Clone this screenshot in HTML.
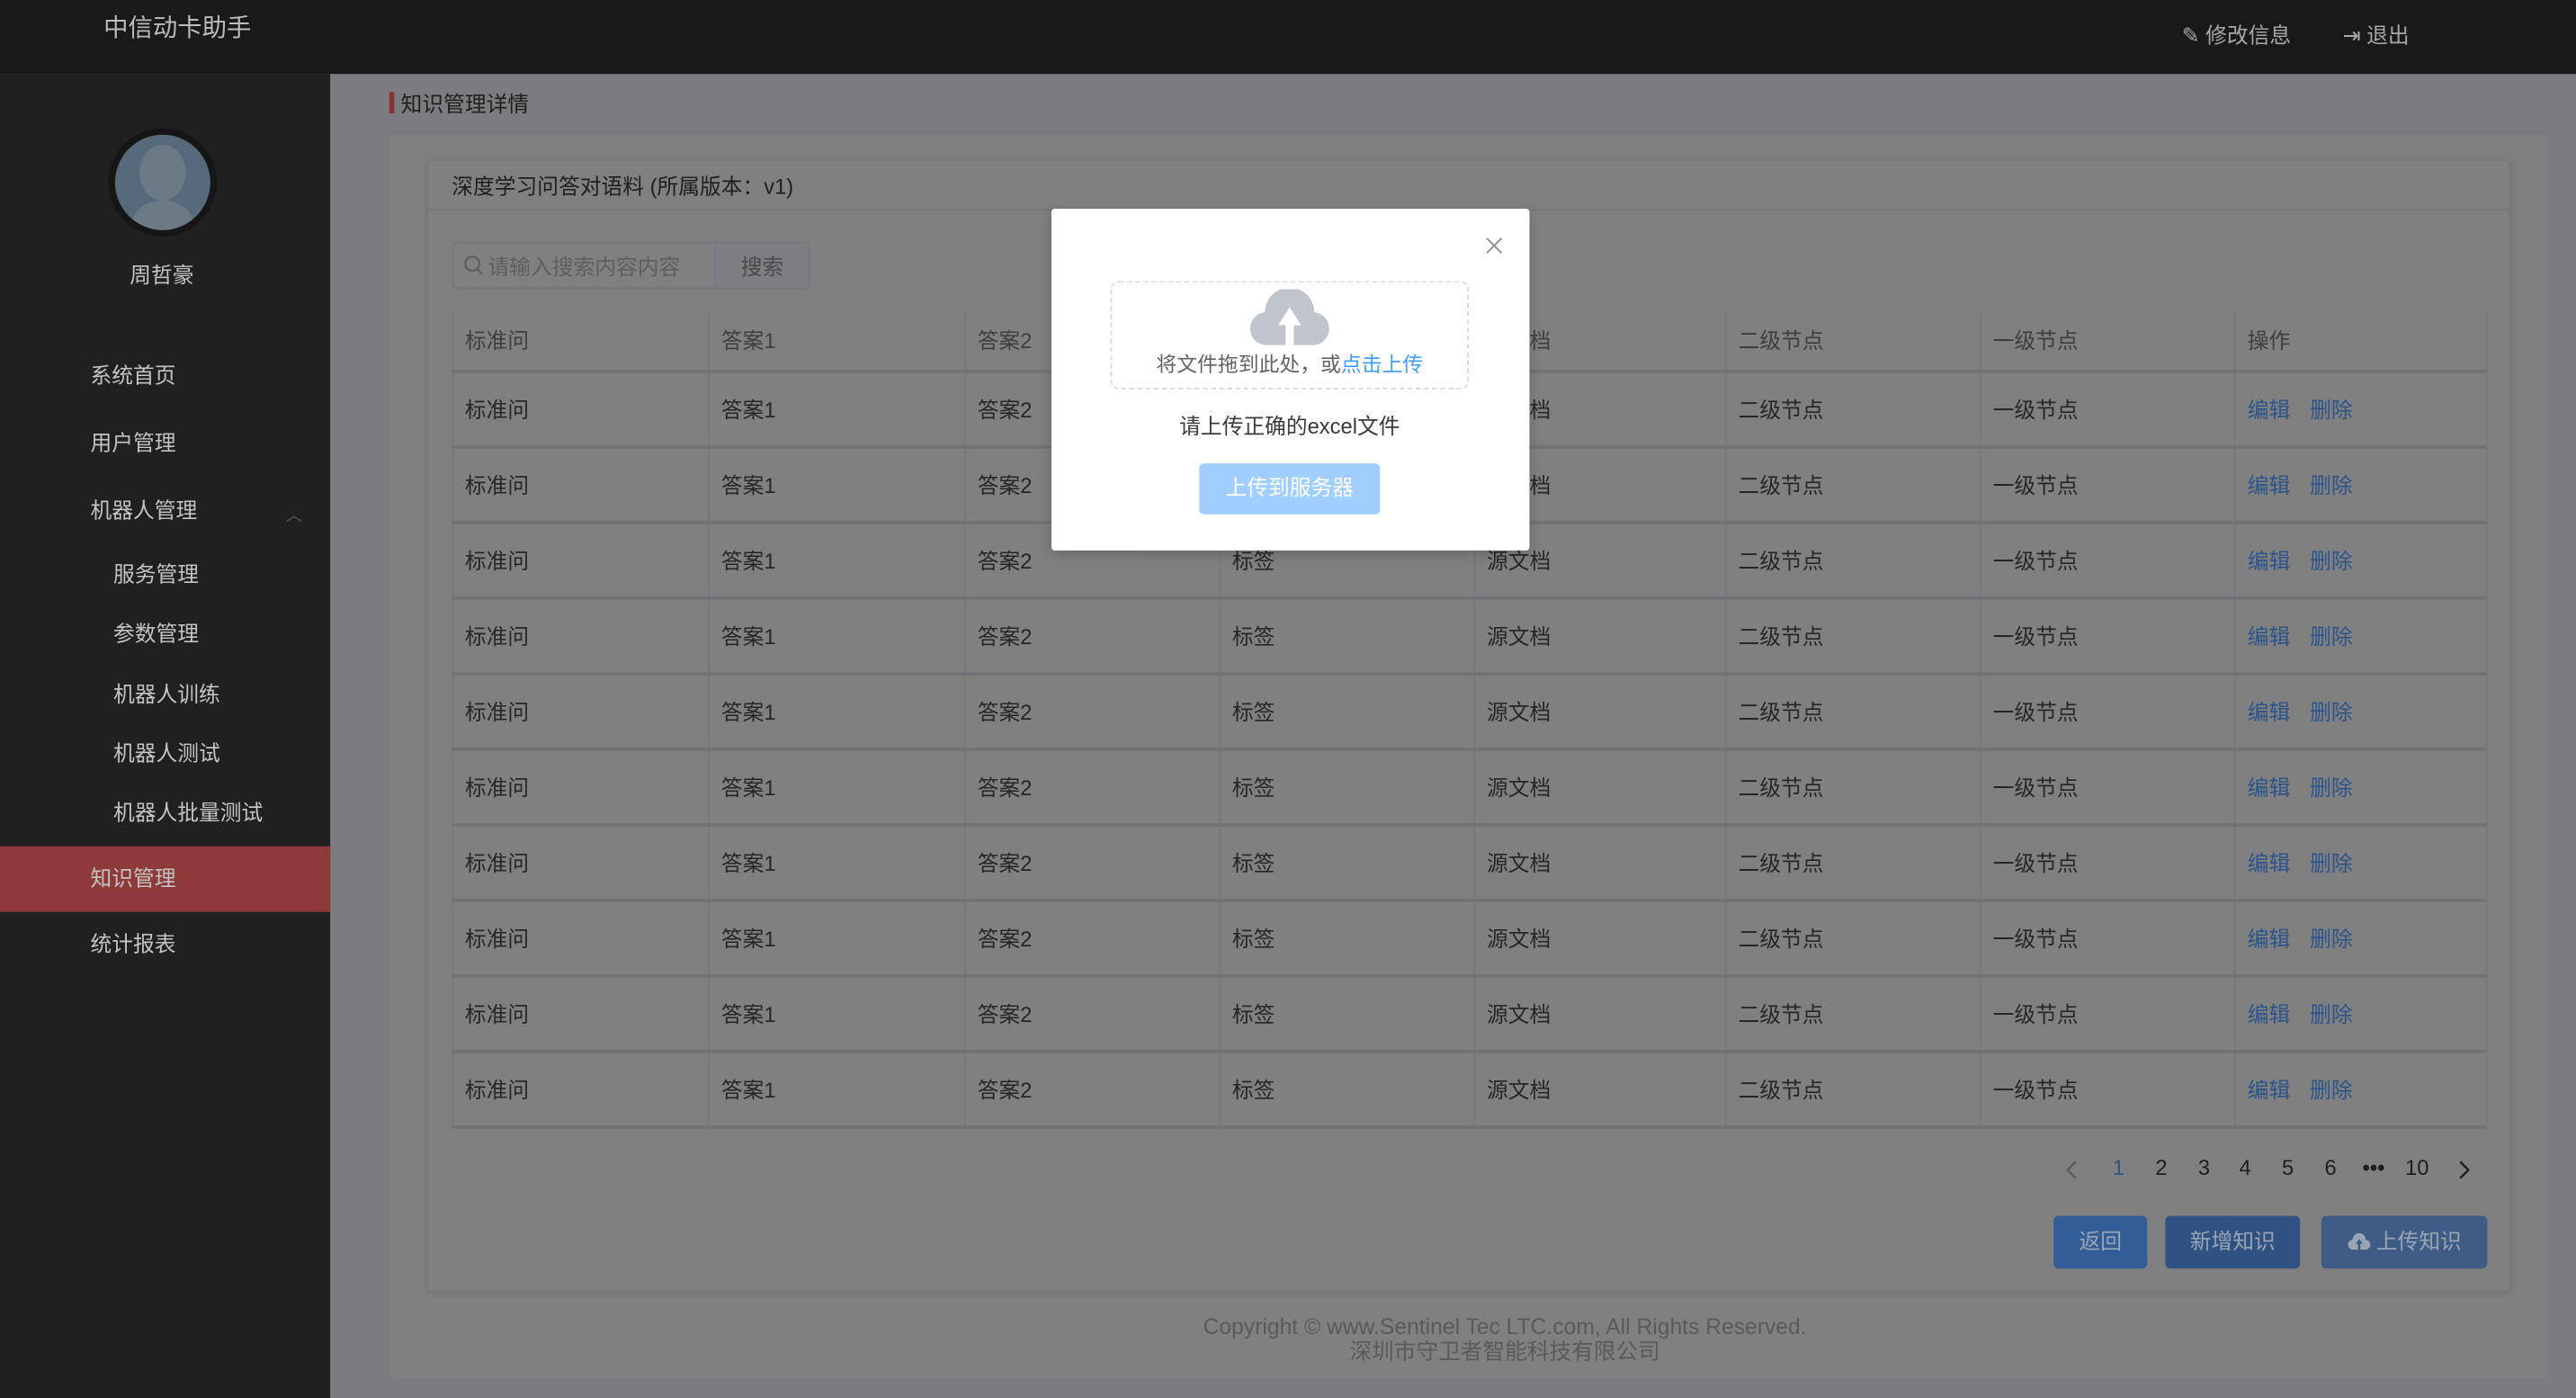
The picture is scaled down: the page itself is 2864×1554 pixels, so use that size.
<!DOCTYPE html>
<html><head><meta charset="utf-8"><style>
*{margin:0;padding:0;box-sizing:border-box}
body{width:2864px;height:1554px;overflow:hidden;background:#7b7c80;font-family:"Liberation Sans","Noto Sans CJK SC",sans-serif}
#s{position:absolute;left:0;top:0;width:1568px;height:851px;transform:scale(1.82653);transform-origin:0 0;background:#7b7c80}
.a{position:absolute;white-space:nowrap}
.hd{left:0;top:0;width:1568px;height:45px;background:#19181a}
.sb{left:0;top:45px;width:201px;height:806px;background:#202020}
.m{left:55px;font-size:13px;color:#c4c4c4;line-height:16px}
.m2{left:69px}
td{border-right:1px solid #78787c;border-bottom:2px solid #727277;height:46px;padding-left:7px;font-size:13px;color:#262626;vertical-align:middle;padding-bottom:2px}
td:last-child{border-right:none}
table{border-collapse:collapse;table-layout:fixed;border-left:1px solid #78787c;border-right:1px solid #78787c}
tr.h td{height:36px;color:#3e3e3e}
.l{color:#2b548c;margin-right:12px}
.pg{top:703px;font-size:13px;color:#1e1e1e}
.b{top:740px;height:32px;border-radius:3px;color:#9aa5b4;font-size:13px;text-align:center;line-height:32px}
</style></head><body><div id="s">
<div class="a hd"></div>
<div class="a" style="left:63px;top:6px;font-size:15px;color:#bdbdbd">中信动卡助手</div>
<div class="a" style="left:1328px;top:11px;font-size:13px;color:#a8a8a8">✎ 修改信息</div>
<div class="a" style="left:1426px;top:11px;font-size:13px;color:#a8a8a8">⇥ 退出</div>
<div class="a sb"></div>
<div class="a" style="left:66px;top:78px;width:66px;height:66px;border-radius:50%;background:#161616"></div>
<div class="a" style="left:70px;top:82px;width:58px;height:58px;border-radius:50%;background:#566a7c;overflow:hidden">
<div style="position:absolute;left:15px;top:6px;width:28px;height:34px;border-radius:50%;background:#6c7a86"></div>
<div style="position:absolute;left:10px;top:40px;width:38px;height:30px;border-radius:50% 50% 0 0;background:#6c7a86"></div></div>
<div class="a" style="left:79px;top:157px;font-size:13px;color:#c4c4c4">周哲豪</div>
<div class="a m" style="top:221px">系统首页</div>
<div class="a m" style="top:262px">用户管理</div>
<div class="a m" style="top:303px">机器人管理</div>
<div class="a" style="left:174px;top:305px;font-size:10px;color:#555">︿</div>
<div class="a m m2" style="top:342px">服务管理</div>
<div class="a m m2" style="top:378px">参数管理</div>
<div class="a m m2" style="top:415px">机器人训练</div>
<div class="a m m2" style="top:451px">机器人测试</div>
<div class="a m m2" style="top:487px">机器人批量测试</div>
<div class="a" style="left:0;top:515px;width:201px;height:40px;background:#8f3a3a"></div>
<div class="a m" style="top:527px">知识管理</div>
<div class="a m" style="top:567px">统计报表</div>

<div class="a" style="left:237px;top:56px;width:3px;height:13px;background:#8e2f2f"></div>
<div class="a" style="left:244px;top:53px;font-size:13px;color:#1e1e1e">知识管理详情</div>
<div class="a" style="left:237px;top:82px;width:1314px;height:757px;background:#808080"></div>
<div class="a" style="left:260px;top:97px;width:1268px;height:689px;background:#808080;border:1px solid #7a7a7a;box-shadow:0 1px 4px rgba(0,0,0,.12)"></div>
<div class="a" style="left:260px;top:127px;width:1268px;height:1px;background:#767678"></div>
<div class="a" style="left:275px;top:103px;font-size:13px;color:#1e1e1e">深度学习问答对语料 (所属版本：v1)</div>
<div class="a" style="left:275px;top:147px;width:218px;height:29px;border:1px solid #75777b;border-radius:3px"></div>
<div class="a" style="left:435px;top:148px;width:1px;height:27px;background:#75777b"></div>
<div class="a" style="left:436px;top:148px;width:56px;height:27px;background:#7d7e82"></div>
<svg class="a" style="left:282px;top:155px" width="12" height="13" viewBox="0 0 12 13"><circle cx="5.5" cy="5.5" r="4.3" fill="none" stroke="#5e5e5e" stroke-width="1.2"/><path d="M8.6 8.8l2.6 3" stroke="#5e5e5e" stroke-width="1.2"/></svg>
<div class="a" style="left:297px;top:152px;font-size:13px;color:#5e5e5e">请输入搜索内容内容</div>
<div class="a" style="left:451px;top:152px;font-size:13px;color:#4a4a4a">搜索</div>

<table class="a" style="left:275px;top:190px;width:1239px">
<colgroup><col style="width:156px"><col style="width:156px"><col style="width:155px"><col style="width:155px"><col style="width:153px"><col style="width:155px"><col style="width:155px"><col></colgroup>
<tr class="h"><td>标准问</td><td>答案1</td><td>答案2</td><td>标签</td><td>源文档</td><td>二级节点</td><td>一级节点</td><td>操作</td></tr>
<tr><td>标准问</td><td>答案1</td><td>答案2</td><td>标签</td><td>源文档</td><td>二级节点</td><td>一级节点</td><td><span class="l">编辑</span><span class="l">删除</span></td></tr>
<tr><td>标准问</td><td>答案1</td><td>答案2</td><td>标签</td><td>源文档</td><td>二级节点</td><td>一级节点</td><td><span class="l">编辑</span><span class="l">删除</span></td></tr>
<tr><td>标准问</td><td>答案1</td><td>答案2</td><td>标签</td><td>源文档</td><td>二级节点</td><td>一级节点</td><td><span class="l">编辑</span><span class="l">删除</span></td></tr>
<tr><td>标准问</td><td>答案1</td><td>答案2</td><td>标签</td><td>源文档</td><td>二级节点</td><td>一级节点</td><td><span class="l">编辑</span><span class="l">删除</span></td></tr>
<tr><td>标准问</td><td>答案1</td><td>答案2</td><td>标签</td><td>源文档</td><td>二级节点</td><td>一级节点</td><td><span class="l">编辑</span><span class="l">删除</span></td></tr>
<tr><td>标准问</td><td>答案1</td><td>答案2</td><td>标签</td><td>源文档</td><td>二级节点</td><td>一级节点</td><td><span class="l">编辑</span><span class="l">删除</span></td></tr>
<tr><td>标准问</td><td>答案1</td><td>答案2</td><td>标签</td><td>源文档</td><td>二级节点</td><td>一级节点</td><td><span class="l">编辑</span><span class="l">删除</span></td></tr>
<tr><td>标准问</td><td>答案1</td><td>答案2</td><td>标签</td><td>源文档</td><td>二级节点</td><td>一级节点</td><td><span class="l">编辑</span><span class="l">删除</span></td></tr>
<tr><td>标准问</td><td>答案1</td><td>答案2</td><td>标签</td><td>源文档</td><td>二级节点</td><td>一级节点</td><td><span class="l">编辑</span><span class="l">删除</span></td></tr>
<tr><td>标准问</td><td>答案1</td><td>答案2</td><td>标签</td><td>源文档</td><td>二级节点</td><td>一级节点</td><td><span class="l">编辑</span><span class="l">删除</span></td></tr>
</table>

<svg class="a" style="left:1257px;top:706px" width="8" height="12" viewBox="0 0 8 12"><path d="M6.5 1L1.5 6l5 5" fill="none" stroke="#5c5c5c" stroke-width="1.3"/></svg>
<div class="a pg" style="left:1286px;color:#2b548c">1</div>
<div class="a pg" style="left:1312px">2</div>
<div class="a pg" style="left:1338px">3</div>
<div class="a pg" style="left:1363px">4</div>
<div class="a pg" style="left:1389px">5</div>
<div class="a pg" style="left:1415px">6</div>
<div class="a pg" style="left:1438px;font-weight:bold">•••</div>
<div class="a pg" style="left:1464px">10</div>
<svg class="a" style="left:1496px;top:706px" width="8" height="12" viewBox="0 0 8 12"><path d="M1.5 1l5 5-5 5" fill="none" stroke="#1e1e1e" stroke-width="1.3"/></svg>
<div class="a b" style="left:1250px;width:57px;background:#325d96">返回</div>
<div class="a b" style="left:1318px;width:82px;background:#2f5282">新增知识</div>
<div class="a b" style="left:1413px;width:101px;background:#3e5c85"><svg width="14" height="11" viewBox="0 0 14 11" style="vertical-align:-1px"><path d="M3.5 10.5a3 3 0 0 1-.5-6a4 4 0 0 1 8 0a3 3 0 0 1-.5 6z" fill="#9aa5b4"/><path d="M7 4L4.8 7h1.5v3.5h1.4V7h1.5z" fill="#3e5c85"/></svg> 上传知识</div>
<div class="a" style="left:0;width:1832px;top:800px;text-align:center;font-size:13.5px;line-height:15px;color:#5a5a5a">Copyright © www.Sentinel Tec LTC.com, All Rights Reserved.<br>深圳市守卫者智能科技有限公司</div>

<div class="a" style="left:640px;top:127px;width:291px;height:208px;background:#fff;border-radius:2px;box-shadow:0 2px 8px rgba(0,0,0,.2)"></div>
<svg class="a" style="left:904px;top:144px" width="11" height="11" viewBox="0 0 11 11"><path d="M1 1l9 9M10 1l-9 9" stroke="#909399" stroke-width="1.1"/></svg>
<div class="a" style="left:676px;top:171px;width:218px;height:66px;border:1px dashed #d9d9d9;border-radius:5px"></div>
<svg class="a" style="left:760px;top:176px" width="50" height="36" viewBox="0 0 50 36"><path d="M12 34a10 10 0 0 1 -2-20a15 15 0 0 1 30 0a10 10 0 0 1 -2 20z" fill="#c0c4cc"/><path d="M25 11l-7 11h4.5v12h5V22H32z" fill="#fff"/></svg>
<div class="a" style="left:0;width:1570px;top:211px;text-align:center;font-size:12.5px;color:#606266">将文件拖到此处，或<span style="color:#409eff">点击上传</span></div>
<div class="a" style="left:0;width:1570px;top:249px;text-align:center;font-size:13px;color:#3a3a3a">请上传正确的excel文件</div>
<div class="a" style="left:730px;top:282px;width:110px;height:31px;background:#a0cfff;border-radius:3px;color:#fff;font-size:13px;text-align:center;line-height:30px">上传到服务器</div>
</div></body></html>
